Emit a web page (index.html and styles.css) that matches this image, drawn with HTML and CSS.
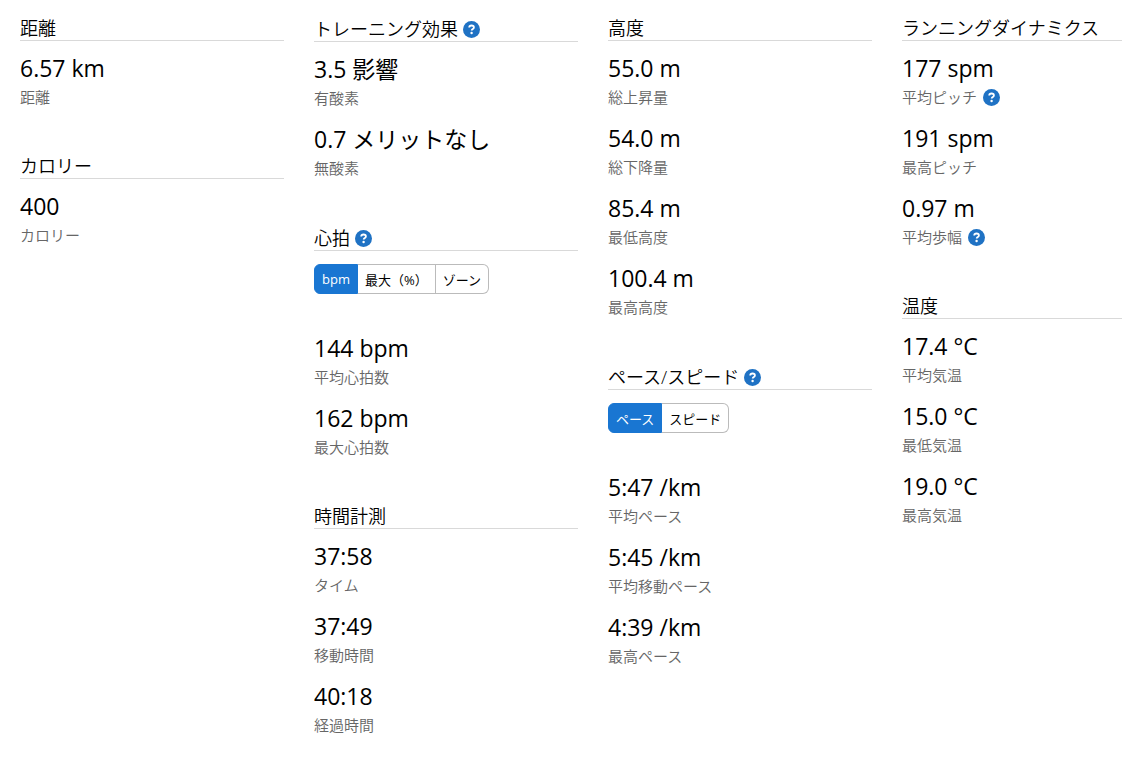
FILE: index.html
```html
<!DOCTYPE html>
<html lang="ja">

<head>
    <meta charset="UTF-8">
    <meta name="viewport" content="width=device-width, initial-scale=1.0">
    <title>ランニング統計</title>
    <link rel="stylesheet" href="styles.css">
</head>

<body>
    <svg class="sprite" aria-hidden="true">
        <symbol id="icon-help" viewBox="0 0 17 17">
            <circle cx="8.5" cy="8.5" r="8.5" fill="#1f72c4" />
            <path d="M6.2 6.5C6.3 5 7.2 4.5 8.5 4.5c1.4 0 2.4.7 2.4 1.9 0 1.6-2.2 1.6-2.2 3.2" fill="none" stroke="#fff" stroke-width="1.8" />
            <circle cx="8.6" cy="12" r="1.2" fill="#fff" />
        </symbol>
    </svg>

    <main class="stats">
        <div class="column">
            <section class="block">
                <h2 class="title">距離</h2>
                <div class="item">
                    <div class="value">6.57 km</div>
                    <div class="label">距離</div>
                </div>
            </section>
            <section class="block">
                <h2 class="title">カロリー</h2>
                <div class="item">
                    <div class="value">400</div>
                    <div class="label">カロリー</div>
                </div>
            </section>
        </div>

        <div class="column">
            <section class="block">
                <h2 class="title title-help">トレーニング効果
                    <button class="help" type="button" aria-label="ヘルプ"><svg><use href="#icon-help" /></svg></button>
                </h2>
                <div class="item">
                    <div class="value">3.5 影響</div>
                    <div class="label">有酸素</div>
                </div>
                <div class="item">
                    <div class="value">0.7 メリットなし</div>
                    <div class="label">無酸素</div>
                </div>
            </section>
            <section class="block">
                <h2 class="title title-help">心拍
                    <button class="help" type="button" aria-label="ヘルプ"><svg><use href="#icon-help" /></svg></button>
                </h2>
                <div class="toggle">
                    <button class="toggle-btn active" type="button">bpm</button>
                    <button class="toggle-btn" type="button">最大（%）</button>
                    <button class="toggle-btn" type="button">ゾーン</button>
                </div>
                <div class="item">
                    <div class="value">144 bpm</div>
                    <div class="label">平均心拍数</div>
                </div>
                <div class="item">
                    <div class="value">162 bpm</div>
                    <div class="label">最大心拍数</div>
                </div>
            </section>
            <section class="block">
                <h2 class="title">時間計測</h2>
                <div class="item">
                    <div class="value">37:58</div>
                    <div class="label">タイム</div>
                </div>
                <div class="item">
                    <div class="value">37:49</div>
                    <div class="label">移動時間</div>
                </div>
                <div class="item">
                    <div class="value">40:18</div>
                    <div class="label">経過時間</div>
                </div>
            </section>
        </div>

        <div class="column">
            <section class="block">
                <h2 class="title">高度</h2>
                <div class="item">
                    <div class="value">55.0 m</div>
                    <div class="label">総上昇量</div>
                </div>
                <div class="item">
                    <div class="value">54.0 m</div>
                    <div class="label">総下降量</div>
                </div>
                <div class="item">
                    <div class="value">85.4 m</div>
                    <div class="label">最低高度</div>
                </div>
                <div class="item">
                    <div class="value">100.4 m</div>
                    <div class="label">最高高度</div>
                </div>
            </section>
            <section class="block">
                <h2 class="title title-help">ペース/スピード
                    <button class="help" type="button" aria-label="ヘルプ"><svg><use href="#icon-help" /></svg></button>
                </h2>
                <div class="toggle">
                    <button class="toggle-btn active" type="button">ペース</button>
                    <button class="toggle-btn" type="button">スピード</button>
                </div>
                <div class="item">
                    <div class="value">5:47 /km</div>
                    <div class="label">平均ペース</div>
                </div>
                <div class="item">
                    <div class="value">5:45 /km</div>
                    <div class="label">平均移動ペース</div>
                </div>
                <div class="item">
                    <div class="value">4:39 /km</div>
                    <div class="label">最高ペース</div>
                </div>
            </section>
        </div>

        <div class="column">
            <section class="block">
                <h2 class="title">ランニングダイナミクス</h2>
                <div class="item">
                    <div class="value">177 spm</div>
                    <div class="label">平均ピッチ
                        <button class="help" type="button" aria-label="ヘルプ"><svg><use href="#icon-help" /></svg></button>
                    </div>
                </div>
                <div class="item">
                    <div class="value">191 spm</div>
                    <div class="label">最高ピッチ</div>
                </div>
                <div class="item">
                    <div class="value">0.97 m</div>
                    <div class="label">平均歩幅
                        <button class="help" type="button" aria-label="ヘルプ"><svg><use href="#icon-help" /></svg></button>
                    </div>
                </div>
            </section>
            <section class="block">
                <h2 class="title">温度</h2>
                <div class="item">
                    <div class="value">17.4 °C</div>
                    <div class="label">平均気温</div>
                </div>
                <div class="item">
                    <div class="value">15.0 °C</div>
                    <div class="label">最低気温</div>
                </div>
                <div class="item">
                    <div class="value">19.0 °C</div>
                    <div class="label">最高気温</div>
                </div>
            </section>
        </div>
    </main>
</body>

</html>
```
FILE: styles.css
```css
* {
    margin: 0;
    padding: 0;
    box-sizing: border-box;
}
body {
    font-family: 'Open Sans', 'Noto Sans CJK JP', sans-serif;
    color: #000;
    background: #fff;
}
.sprite {
    display: none;
}
.stats {
    display: grid;
    grid-template-columns: 6fr 6fr 6fr 5fr;
    gap: 30px;
    padding: 14px 0 0 20px;
}
.column {
    display: flex;
    flex-direction: column;
    gap: 42px;
}
.block {
    display: flex;
    flex-direction: column;
    gap: 12px;
}
.title {
    display: flex;
    align-items: center;
    gap: 5px;
    margin-bottom: -1px;
    padding-top: 2px;
    border-bottom: 1px solid #d9d9d9;
    font-size: 18px;
    font-weight: 350;
    line-height: 24px;
}
.title-help {
    padding-top: 3px;
}
.value {
    font-size: 23px;
    line-height: 32px;
}
.label {
    display: flex;
    align-items: center;
    gap: 6px;
    font-size: 15px;
    font-weight: 350;
    line-height: 26px;
    color: #666;
}
.help {
    border: none;
    background: none;
    cursor: pointer;
}
.help svg {
    display: block;
    width: 17px;
    height: 17px;
}
.toggle {
    display: flex;
    margin: 2px 0 26px;
}
.toggle-btn {
    height: 30px;
    padding: 0 7px;
    border: 1px solid #bbb;
    border-left: none;
    background: #fff;
    color: #000;
    font-family: inherit;
    font-size: 13px;
    cursor: pointer;
}
.toggle-btn.active {
    border: 1px solid #1976d2;
    background: #1976d2;
    color: #fff;
}
.toggle-btn:first-child {
    border-radius: 6px 0 0 6px;
}
.toggle-btn:last-child {
    border-radius: 0 6px 6px 0;
}
```
